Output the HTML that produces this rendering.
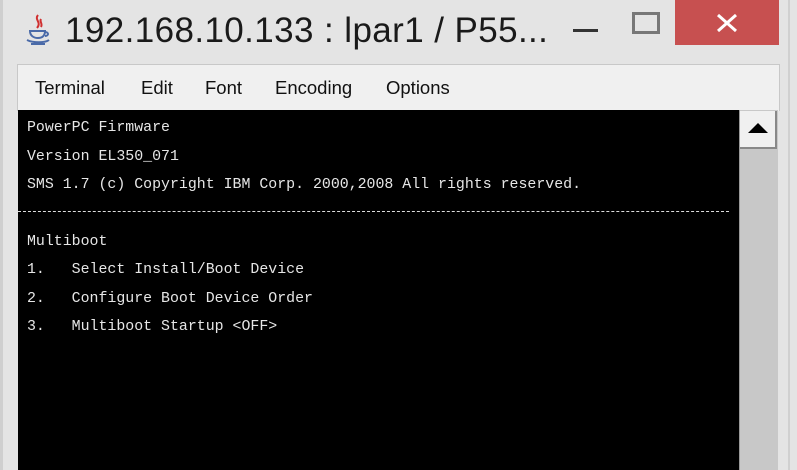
<!DOCTYPE html>
<html><head><style>
body{margin:0;width:797px;height:470px;background:#e4e4e4;position:relative;overflow:hidden;font-family:"Liberation Sans",sans-serif}
.a{position:absolute}
.t{font-family:"Liberation Mono",monospace;font-size:14.9px;color:#e6e6e6;position:absolute;left:27px;white-space:pre;line-height:16px}
.m{position:absolute;top:77px;font-size:18.5px;color:#111}
</style></head><body>
<div class="a" style="left:0;top:0;width:3px;height:470px;background:#cfcfcf"></div>
<div class="a" style="left:788px;top:0;width:2px;height:470px;background:#d0d0d0"></div>
<svg class="a" style="left:24px;top:13px" width="30" height="34" viewBox="0 0 30 34">
<path d="M14 2c-4 5 4 7 -1 13M17 6c-2 3 2 4 0 8" stroke="#d03030" stroke-width="2" fill="none"/>
<path d="M6 18h15c0 5-3 7-7 7s-8-2-8-7zM21 19c4 0 4 4 0 4" stroke="#4a6aa8" stroke-width="2" fill="none"/>
<path d="M3 27c6 3 18 3 22 0M7 31h14" stroke="#4a6aa8" stroke-width="2" fill="none"/>
</svg>
<div class="a" style="left:65px;top:11px;font-size:35px;letter-spacing:0.4px;color:#1a1a1a;white-space:nowrap">192.168.10.133 : lpar1 / P55...</div>
<div class="a" style="left:573px;top:29px;width:25px;height:3px;background:#333"></div>
<div class="a" style="left:632px;top:12px;width:22px;height:16px;border:3px solid #777"></div>
<div class="a" style="left:675px;top:0;width:104px;height:45px;background:#c75050"></div>
<svg class="a" style="left:716px;top:13px" width="22" height="20"><path d="M2 2L20 18M20 2L2 18" stroke="#fff" stroke-width="3"/></svg>
<div class="a" style="left:17px;top:64px;width:761px;height:46px;background:#f0f0f0;border:1px solid #c8c8c8;border-bottom:none"></div>
<div class="m" style="left:35px">Terminal</div>
<div class="m" style="left:141px">Edit</div>
<div class="m" style="left:205px">Font</div>
<div class="m" style="left:275px">Encoding</div>
<div class="m" style="left:386px">Options</div>
<div class="a" style="left:18px;top:110px;width:721px;height:360px;background:#000"></div>
<div class="a" style="left:739px;top:110px;width:38px;height:360px;background:#c8c8c8;border-left:1px solid #999"></div>
<div class="a" style="left:740px;top:111px;width:35px;height:36px;background:#f0f0f0;border-right:2px solid #888;border-bottom:2px solid #888"></div>
<div class="a" style="left:748px;top:123px;width:0;height:0;border-left:10px solid transparent;border-right:10px solid transparent;border-bottom:10px solid #000"></div>
<div class="t" style="top:120px">PowerPC Firmware</div>
<div class="t" style="top:149px">Version EL350_071</div>
<div class="t" style="top:177px">SMS 1.7 (c) Copyright IBM Corp. 2000,2008 All rights reserved.</div>
<div class="a" style="left:18px;top:211px;width:711px;border-top:1px dashed #ddd"></div>
<div class="t" style="top:234px">Multiboot</div>
<div class="t" style="top:262px">1.   Select Install/Boot Device</div>
<div class="t" style="top:291px">2.   Configure Boot Device Order</div>
<div class="t" style="top:319px">3.   Multiboot Startup &lt;OFF&gt;</div>
</body></html>
